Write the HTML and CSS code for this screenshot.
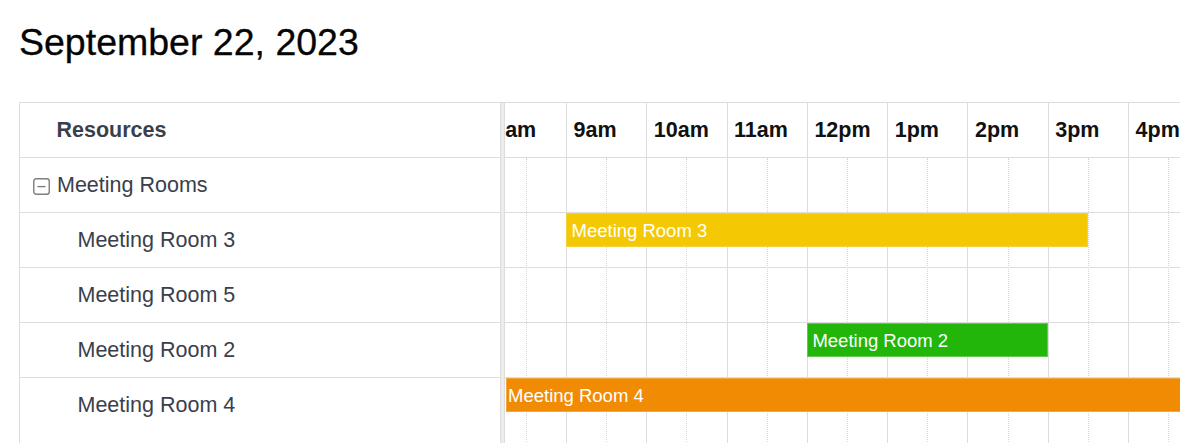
FILE: index.html
```html
<!DOCTYPE html>
<html lang="en">
<head>
<meta charset="utf-8">
<title>Resource Timeline</title>
<link rel="stylesheet" href="styles.css">
</head>
<body>
<div class="page">
  <h1 class="title">September 22, 2023</h1>
  <div class="scheduler">
    <div class="res-pane">
      <div class="res-head">Resources</div>
      <div class="res-row group">
        <span class="expander">
          <svg width="17" height="17" viewBox="0 0 17 17" aria-hidden="true">
            <rect x="0.75" y="0.75" width="15.5" height="15.5" rx="2.5" fill="none" stroke="#7f7f7f" stroke-width="1.4"/>
            <line x1="4.5" y1="8.6" x2="12.5" y2="8.6" stroke="#7f7f7f" stroke-width="1.4"/>
          </svg>
        </span>
        <span>Meeting Rooms</span>
      </div>
      <div class="res-row child">Meeting Room 3</div>
      <div class="res-row child">Meeting Room 5</div>
      <div class="res-row child">Meeting Room 2</div>
      <div class="res-row child last">Meeting Room 4</div>
    </div>
    <div class="divider"></div>
    <div class="time-pane">
      <div class="time-inner">
        <div class="time-head">
          <div class="hour">8am</div>
          <div class="hour">9am</div>
          <div class="hour">10am</div>
          <div class="hour">11am</div>
          <div class="hour">12pm</div>
          <div class="hour">1pm</div>
          <div class="hour">2pm</div>
          <div class="hour">3pm</div>
          <div class="hour">4pm</div>
          <div class="hour">5pm</div>
        </div>
        <div class="time-body">
          <div class="slot-lines">
            <div class="slot major"></div><div class="slot minor"></div>
            <div class="slot major"></div><div class="slot minor"></div>
            <div class="slot major"></div><div class="slot minor"></div>
            <div class="slot major"></div><div class="slot minor"></div>
            <div class="slot major"></div><div class="slot minor"></div>
            <div class="slot major"></div><div class="slot minor"></div>
            <div class="slot major"></div><div class="slot minor"></div>
            <div class="slot major"></div><div class="slot minor"></div>
            <div class="slot major"></div><div class="slot minor"></div>
            <div class="slot major"></div><div class="slot minor"></div>
          </div>
          <div class="lane"></div>
          <div class="lane">
            <div class="event yellow" style="left:80.3px;width:522px">Meeting Room 3</div>
          </div>
          <div class="lane"></div>
          <div class="lane">
            <div class="event green" style="left:321.2px;width:241px">Meeting Room 2</div>
          </div>
          <div class="lane last">
            <div class="event orange" style="left:19.8px;width:800px">Meeting Room 4</div>
          </div>
        </div>
      </div>
    </div>
  </div>
</div>
</body>
</html>
```

FILE: styles.css
```css
* {
  box-sizing: border-box;
}

html, body {
  margin: 0;
  padding: 0;
  background: #ffffff;
  overflow: hidden;
}

body {
  font-family: "Liberation Sans", Arial, sans-serif;
  font-size: 21.5px;
  color: #3a404b;
}

.page {
  padding-left: 19px;
  height: 443px;
  overflow: hidden;
}

.title {
  margin: 21px 0 0 0;
  font-size: 37.5px;
  line-height: 43px;
  font-weight: 400;
  color: #050505;
  -webkit-text-stroke: 0.3px #050505;
}

.scheduler {
  margin-top: 38px;
  display: flex;
  border-top: 1px solid #dddddd;
  border-left: 1px solid #dddddd;
}

.res-pane {
  width: 480px;
  flex: none;
}

.res-head {
  height: 55px;
  display: flex;
  align-items: center;
  padding-left: 36.5px;
  padding-top: 1px;
  font-weight: 700;
  border-bottom: 1px solid #dddddd;
  color: #3a404b;
}

.res-row {
  height: 55px;
  display: flex;
  align-items: center;
  padding-top: 1px;
  border-bottom: 1px solid #dddddd;
}

.res-row.group {
  padding-left: 13px;
  gap: 7px;
}

.expander {
  display: flex;
  width: 17px;
  height: 17px;
  margin-top: 1px;
}

.res-row.child {
  padding-left: 57.5px;
}

.res-row.last {
  height: 90px;
  border-bottom: none;
  align-items: flex-start;
  padding-top: 15px;
}

.divider {
  width: 5px;
  flex: none;
  background: #ececec;
  border-left: 1px solid #dddddd;
  border-right: 1px solid #dddddd;
}

.time-pane {
  flex: 1;
  overflow: hidden;
}

.time-inner {
  width: 803px;
  margin-left: -19.3px;
}

.time-head {
  display: flex;
  height: 55px;
  border-bottom: 1px solid #dddddd;
}

.hour {
  width: 80.3px;
  flex: none;
  border-left: 1px solid #dddddd;
  display: flex;
  align-items: center;
  padding-left: 6.5px;
  padding-top: 1px;
  font-weight: 700;
  color: #111111;
}

.time-body {
  position: relative;
}

.slot-lines {
  position: absolute;
  top: 0;
  left: 0;
  right: 0;
  bottom: 0;
  display: flex;
}

.slot {
  width: 40.15px;
  flex: none;
  height: 100%;
}

.slot.major {
  border-left: 1px solid #dddddd;
}

.slot.minor {
  border-left: 1px dotted #d6d6d6;
}

.lane {
  position: relative;
  height: 55px;
  border-bottom: 1px solid #dddddd;
}

.lane.last {
  height: 90px;
  border-bottom: none;
}

.event {
  position: absolute;
  top: 0;
  height: 34px;
  display: flex;
  align-items: center;
  padding-left: 4.5px;
  padding-top: 1px;
  font-size: 18.5px;
  color: #ffffff;
  white-space: nowrap;
  overflow: hidden;
}

.event.yellow {
  background: #f4c904;
  border: 1px solid #f6d038;
}

.event.green {
  background: #22b60a;
  border: 1px solid #5ccd4b;
}

.event.orange {
  background: #f28b04;
  border: 1px solid #f5a63f;
  padding-left: 1.5px;
}
```
